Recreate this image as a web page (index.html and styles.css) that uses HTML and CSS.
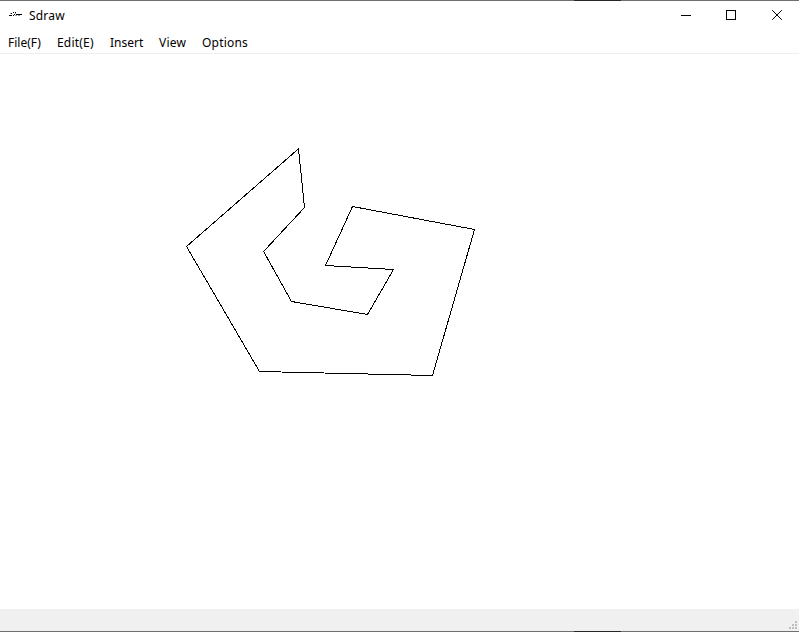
FILE: index.html
```html
<!DOCTYPE html>
<html lang="en">
<head>
<meta charset="utf-8">
<title>Sdraw</title>
<link rel="stylesheet" href="styles.css">
</head>
<body>
<div class="window">
  <div class="edge"></div>
  <header class="titlebar">
    <svg class="app-icon" width="16" height="16" viewBox="0 0 16 16" shape-rendering="crispEdges">
      <path d="M1 7h3v1H1zM3 5h1v1H3zM5 4h1v1H5zM5 7h1v1H5zM7 4h1v1H7zM6 6h1v1H6zM8 6h2v1H8zM10 6h4v1h-4z"/>
      <path class="soft" d="M2 5h1v1H2zM7 5h1v1H7zM7 7h2v1H7zM10 7h2v1h-2z"/>
    </svg>
    <h1 class="title">Sdraw</h1>
    <div class="controls">
      <svg class="control" width="46" height="30" viewBox="0 0 46 30" shape-rendering="crispEdges"><path d="M20 14.5h10"/></svg>
      <svg class="control" width="46" height="30" viewBox="0 0 46 30" shape-rendering="crispEdges"><path d="M19.5 9.5h9v9h-9z"/></svg>
      <svg class="control" width="46" height="30" viewBox="0 0 46 30"><path d="M19.2 9.2l9.6 9.6M28.8 9.2l-9.6 9.6"/></svg>
    </div>
  </header>
  <nav class="menubar">
    <span class="item file">File(F)</span>
    <span class="item edit">Edit(E)</span>
    <span class="item insert">Insert</span>
    <span class="item view">View</span>
    <span class="item options">Options</span>
  </nav>
  <main class="canvas">
    <svg width="799" height="555" viewBox="0 54 799 555" shape-rendering="crispEdges">
      <polygon class="shape" points="298.5,148.8 304.5,207.5 263.6,251.5 291.5,301.5 367.5,314.5 393.5,269.5 325.5,265.5 352.5,206.5 474.5,229.5 432.5,375.5 259.5,371.5 186.5,246.5"/>
    </svg>
  </main>
  <footer class="statusbar">
    <svg class="grip" width="8" height="8" viewBox="0 0 8 8" shape-rendering="crispEdges">
      <path d="M6 0h2v2H6zM3 3h2v2H3zM6 3h2v2H6zM0 6h2v2H0zM3 6h2v2H3zM6 6h2v2H6z"/>
    </svg>
  </footer>
  <div class="edge"></div>
</div>
</body>
</html>
```
FILE: styles.css
```css
body {
  margin: 0;
  background: #fff;
  color: #000;
  font: 12px/18px "Noto Sans", "Open Sans", sans-serif;
  letter-spacing: 0.2px;
}

.window {
  display: flex;
  flex-direction: column;
  width: 799px;
  height: 632px;
  overflow: hidden;
}

.edge {
  flex: none;
  height: 1px;
  background: linear-gradient(90deg, #707070 574px, #262626 574px 621px, #707070 621px);
}

.titlebar {
  display: flex;
  flex: none;
  align-items: center;
  height: 30px;
  padding-left: 8px;
}

.app-icon {
  margin-right: 5px;
}

.soft {
  fill: #999;
}

.title {
  margin: 0;
  font-size: 12px;
  font-weight: 400;
}

.controls {
  display: flex;
  margin-left: auto;
}

.control {
  fill: none;
  stroke: #000;
}

.menubar {
  display: flex;
  flex: none;
  box-sizing: border-box;
  height: 23px;
  padding: 3px 8px 0;
  border-bottom: 1px solid #f0f0f0;
}

.item {
  white-space: nowrap;
}

.file {
  width: 49px;
  letter-spacing: 0;
}

.edit { width: 53px; }
.insert { width: 49px; letter-spacing: 0; }
.view { width: 43px; }

.canvas {
  flex: 1;
  min-height: 0;
}

.canvas svg {
  display: block;
}

.shape {
  fill: none;
  stroke: #000;
}

.statusbar {
  display: flex;
  flex: none;
  box-sizing: border-box;
  align-items: flex-end;
  justify-content: flex-end;
  height: 22px;
  padding: 0 2px 2px 0;
  background: #f0f0f0;
}

.grip {
  fill: #bfbfbf;
}
```
